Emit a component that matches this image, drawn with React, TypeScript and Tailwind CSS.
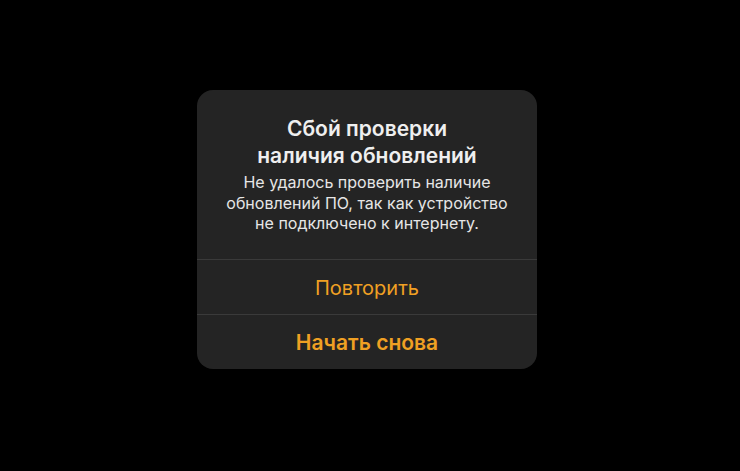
export default function App() {
  return (
    <div
      className="w-[740px] h-[471px] bg-black flex items-start justify-start pl-[197px] pt-[90px]"
      style={{ fontFamily: "Inter, 'Noto Sans', sans-serif" }}
    >
      <div className="w-[340px] h-[279px] rounded-[16px] bg-[#242424] flex flex-col overflow-hidden">
        <div className="flex flex-col items-center text-center pt-[25px] pb-[25px] px-2">
          <div className="text-[21px] leading-[27px] font-semibold text-[#efefef]">
            Сбой проверки
            <br />
            наличия обновлений
          </div>
          <div className="mt-[3px] text-[16px] leading-[20.5px] text-[#e6e6e6]">
            Не удалось проверить наличие
            <br />
            обновлений ПО, так как устройство
            <br />
            не подключено к интернету.
          </div>
        </div>
        <div className="h-px bg-[#3a3a3a]" />
        <button className="h-[54px] flex items-center justify-center pt-[3px] text-[20px] text-[#f0a023]">
          Повторить
        </button>
        <div className="h-px bg-[#3a3a3a]" />
        <button className="flex-1 flex items-center justify-center pt-[2px] text-[21px] font-semibold text-[#f0a023]">
          Начать снова
        </button>
      </div>
    </div>
  );
}
